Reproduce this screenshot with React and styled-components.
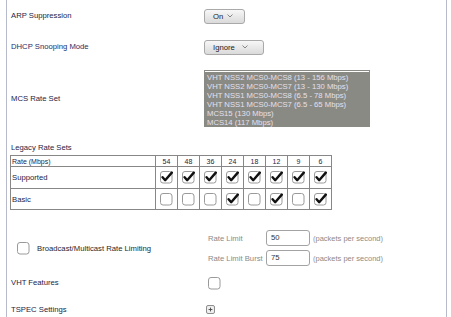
import React from 'react';
import styled, { createGlobalStyle } from 'styled-components';

const GlobalStyle = createGlobalStyle`
  html, body {
    margin: 0;
    padding: 0;
    background: #ffffff;
  }
  body {
    font-family: "Liberation Sans", Arial, sans-serif;
    font-size: 7.7px;
  }
`;

const Frame = styled.div`
  margin-left: 6px;
  width: 441px;
  height: 317px;
  overflow: hidden;
  box-sizing: border-box;
  border-left: 1px solid #b6bacb;
  border-right: 1px solid #b6bacb;
  padding-left: 4px;
  display: flex;
  flex-direction: column;
`;

const FieldRow = styled.div`
  display: flex;
  align-items: center;
  box-sizing: border-box;
  flex-shrink: 0;
  height: ${props => props.height}px;
  padding: ${props => props.pad || 0}px 0;
`;

const Label = styled.div`
  width: ${props => props.width || 193}px;
  flex-shrink: 0;
  color: ${props => props.color || '#1c2446'};
  line-height: 10px;
`;

const Select = styled.div`
  box-sizing: border-box;
  width: ${props => props.width}px;
  height: 15px;
  display: flex;
  align-items: center;
  justify-content: space-between;
  padding: 0 ${props => props.right}px 0 8px;
  border: 1px solid #a9a9a9;
  border-radius: 3px;
  background: linear-gradient(#f7f7f7, #dadada);
  color: #222;
`;

const Chevron = styled.svg`
  width: 6px;
  height: 4px;
`;

const ListBox = styled.div`
  box-sizing: border-box;
  width: 166px;
  height: 57px;
  background: #8a8a84;
  border: 1px solid #8a8a84;
  box-shadow: inset 0 1px 0 #ffffff;
  padding: 2px 0 0 2px;
  color: #e4e0ee;
`;

const ListItem = styled.div`
  line-height: 9px;
  white-space: nowrap;
`;

const SectionTitle = styled.div`
  color: #1c2446;
  line-height: 10px;
  margin-top: 8px;
  flex-shrink: 0;
`;

const RateTable = styled.table`
  margin: 2px 0 0 -1px;
  border-collapse: collapse;
  table-layout: fixed;
  width: 321px;
  flex-shrink: 0;
  color: #1c2446;
  td {
    border: 1px solid #878787;
    padding: 0;
  }
`;

const HeadCell = styled.td`
  height: 10px;
  line-height: 9px;
  font-size: 7px;
  text-align: ${props => (props.first ? 'left' : 'center')};
  padding-left: ${props => (props.first ? 1 : 0)}px !important;
`;

const RowCell = styled.td`
  height: ${props => props.height}px;
  text-align: left;
  padding-left: 1px !important;
`;

const BoxCell = styled.td`
  text-align: center;
  vertical-align: middle;
  line-height: 0;
`;

const CheckWrap = styled.span`
  display: inline-flex;
  vertical-align: middle;
`;

const Check = ({ checked }) => (
  <CheckWrap>
    <svg width="13" height="13" viewBox="0 0 13 13">
      <rect x="0.5" y="0.5" width="11.5" height="11.5" rx="2.5" fill="#fff" stroke="#9a9a9a" />
      {checked && (
        <path d="M2.6 6.2 L5.2 9.2 L11.8 1.6" fill="none" stroke="#111" strokeWidth="2.4" strokeLinecap="round" strokeLinejoin="round" />
      )}
    </svg>
  </CheckWrap>
);

const Broadcast = styled.div`
  display: flex;
  align-items: center;
  margin-top: 20px;
  height: 36px;
  flex-shrink: 0;
`;

const BroadcastLabel = styled.div`
  width: 197px;
  flex-shrink: 0;
  display: flex;
  align-items: center;
  gap: 7px;
  padding-left: 6px;
  box-sizing: border-box;
  color: #1c1f2e;
`;

const LimitGrid = styled.div`
  display: grid;
  grid-template-columns: 55px 44px auto;
  row-gap: 4px;
  column-gap: 3px;
  align-items: center;
  color: #8a8a8a;
`;

const LimitInput = styled.div`
  box-sizing: border-box;
  height: 16px;
  border: 1px solid #a3a3a3;
  border-radius: 3px;
  padding-left: 4px;
  line-height: 14px;
  color: #333;
`;

const Unit = styled.div`
  color: #8f8a86;
  font-size: 7.5px;
`;

const PlusBox = styled.svg`
  width: 9px;
  height: 9px;
  margin-left: 2px;
`;

const rates = ['54', '48', '36', '24', '18', '12', '9', '6'];
const basic = [false, false, false, true, false, true, false, true];
const mcs = [
  'VHT NSS2 MCS0-MCS8 (13 - 156 Mbps)',
  'VHT NSS2 MCS0-MCS7 (13 - 130 Mbps)',
  'VHT NSS1 MCS0-MCS8 (6.5 - 78 Mbps)',
  'VHT NSS1 MCS0-MCS7 (6.5 - 65 Mbps)',
  'MCS15 (130 Mbps)',
  'MCS14 (117 Mbps)',
];

const Arrow = () => (
  <Chevron viewBox="0 0 6 4">
    <path d="M0.5 0.5 L3 3 L5.5 0.5" fill="none" stroke="#7a7a7a" strokeWidth="0.9" />
  </Chevron>
);

export default function App() {
  return (
    <>
      <GlobalStyle />
      <Frame>
        <FieldRow height={32}>
          <Label>ARP Suppression</Label>
          <Select width={41} right={11}>On<Arrow /></Select>
        </FieldRow>
        <FieldRow height={30}>
          <Label color="#1f2d66">DHCP Snooping Mode</Label>
          <Select width={60} right={15}>Ignore<Arrow /></Select>
        </FieldRow>
        <FieldRow height={73} pad={8}>
          <Label>MCS Rate Set</Label>
          <ListBox>
            {mcs.map(m => <ListItem key={m}>{m}</ListItem>)}
          </ListBox>
        </FieldRow>

        <SectionTitle>Legacy Rate Sets</SectionTitle>
        <RateTable>
          <colgroup>
            <col style={{ width: 145 }} />
            {rates.map(r => <col key={r} style={{ width: 22 }} />)}
          </colgroup>
          <tbody>
            <tr>
              <HeadCell first>Rate (Mbps)</HeadCell>
              {rates.map(r => <HeadCell key={r}>{r}</HeadCell>)}
            </tr>
            <tr>
              <RowCell height={21}>Supported</RowCell>
              {rates.map(r => <BoxCell key={r}><Check checked /></BoxCell>)}
            </tr>
            <tr>
              <RowCell height={20}>Basic</RowCell>
              {rates.map((r, i) => <BoxCell key={r}><Check checked={basic[i]} /></BoxCell>)}
            </tr>
          </tbody>
        </RateTable>

        <Broadcast>
          <BroadcastLabel>
            <Check />
            <span>Broadcast/Multicast Rate Limiting</span>
          </BroadcastLabel>
          <LimitGrid>
            <span>Rate Limit</span>
            <LimitInput>50</LimitInput>
            <Unit>(packets per second)</Unit>
            <span>Rate Limit Burst</span>
            <LimitInput>75</LimitInput>
            <Unit>(packets per second)</Unit>
          </LimitGrid>
        </Broadcast>

        <FieldRow height={34}>
          <Label width={197}>VHT Features</Label>
          <Check />
        </FieldRow>
        <FieldRow height={19}>
          <Label width={193}>TSPEC Settings</Label>
          <PlusBox viewBox="0 0 9 9">
            <rect x="0.5" y="0.5" width="8" height="8" rx="1.5" fill="#eeeeee" stroke="#8e8e8e" />
            <path d="M4.5 2.6 V6.4 M2.6 4.5 H6.4" stroke="#444" strokeWidth="0.9" />
          </PlusBox>
        </FieldRow>
      </Frame>
    </>
  );
}
